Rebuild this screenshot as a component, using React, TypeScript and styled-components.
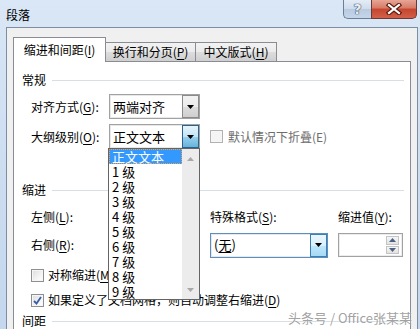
import React from "react";
import styled, { createGlobalStyle } from "styled-components";

const GlobalStyle = createGlobalStyle`
  html, body {
    margin: 0;
    padding: 0;
  }
  body {
    width: 420px;
    height: 329px;
    overflow: hidden;
    font-family: "Noto Sans CJK SC", "Microsoft YaHei", sans-serif;
    font-size: 12px;
    color: #1e1e1e;
    text-autospace: no-autospace;
  }
`;

const levels = ["1 级", "2 级", "3 级", "4 级", "5 级", "6 级", "7 级", "8 级", "9 级"];

const Key: React.FC<{ k: string }> = ({ k }) => (
  <>
    (<U>{k}</U>)
  </>
);

const Arrow: React.FC<{ up?: boolean; color?: string }> = ({ up, color = "#000" }) => (
  <svg width="7" height="4" viewBox="0 0 7 4">
    <polygon points={up ? "0,4 7,4 3.5,0" : "0,0 7,0 3.5,4"} fill={color} />
  </svg>
);

const Check = () => (
  <svg width="9" height="9" viewBox="0 0 9 9">
    <path d="M1 5 L3.5 7.5 L8 1" fill="none" stroke="#3b5ea8" strokeWidth="1.8" />
  </svg>
);

const App: React.FC = () => {
  return (
    <>
      <GlobalStyle />
      <Window>
        <TitleBar>
          <Title>段落</Title>
          <Caption>
            <HelpButton>?</HelpButton>
            <CloseButton>
              <svg width="16" height="12" viewBox="0 0 16 12">
                <path d="M3 2 L13 10 M13 2 L3 10" stroke="#5a1a10" strokeWidth="4.4" strokeLinecap="square" />
                <path d="M3 2 L13 10 M13 2 L3 10" stroke="#ffffff" strokeWidth="2.2" strokeLinecap="square" />
              </svg>
            </CloseButton>
          </Caption>
        </TitleBar>

        <Body>
          <Tabs>
            <Tab $active $width={93}>
              <span>
                缩进和间距<Key k="I" />
              </span>
            </Tab>
            <Tab $width={91}>
              <span>
                换行和分页<Key k="P" />
              </span>
            </Tab>
            <Tab $width={82}>
              <span>
                中文版式<Key k="H" />
              </span>
            </Tab>
          </Tabs>

          <Panel>
            <GroupHeader $top={10}>
              <span>常规</span>
              <Rule />
            </GroupHeader>

            <FieldRow $top={6}>
              <Label>
                对齐方式<Key k="G" />:
              </Label>
              <Combo $width={91}>
                <ComboText>两端对齐</ComboText>
                <ComboButton>
                  <Arrow />
                </ComboButton>
              </Combo>
            </FieldRow>

            <FieldRow $top={5}>
              <Label>
                大纲级别<Key k="O" />:
              </Label>
              <Combo $width={91}>
                <ComboText>正文文本</ComboText>
                <ComboButton $state="pressed">
                  <Arrow />
                </ComboButton>
                <DropList>
                  <Items>
                    <Item $selected>正文文本</Item>
                    {levels.map((l) => (
                      <Item key={l}>{l}</Item>
                    ))}
                  </Items>
                  <ScrollBar>
                    <Arrow up color="#a8a8a8" />
                    <Arrow color="#a8a8a8" />
                  </ScrollBar>
                </DropList>
              </Combo>
              <CheckLine $disabled $gap={5} $left={10}>
                <Box $disabled />
                <span>默认情况下折叠(E)</span>
              </CheckLine>
            </FieldRow>

            <GroupHeader $top={33}>
              <span>缩进</span>
              <Rule />
            </GroupHeader>

            <IndentGrid>
              <Label>
                左侧<Key k="L" />:
              </Label>
              <GridCell $col={3}>
                <Label>
                  特殊格式<Key k="S" />:
                </Label>
              </GridCell>
              <GridCell $col={4}>
                <Label>
                  缩进值<Key k="Y" />:
                </Label>
              </GridCell>
              <Label>
                右侧<Key k="R" />:
              </Label>
              <GridCell $col={3}>
                <Combo $width={118} $focused>
                  <ComboText>
                    <span>
                      (<U>无</U>)
                    </span>
                  </ComboText>
                  <ComboButton $state="hot">
                    <Arrow />
                  </ComboButton>
                </Combo>
              </GridCell>
              <GridCell $col={4}>
                <Spin>
                  <SpinButtons>
                    <SpinBtn>
                      <Arrow up color="#4d6185" />
                    </SpinBtn>
                    <SpinBtn>
                      <Arrow color="#4d6185" />
                    </SpinBtn>
                  </SpinButtons>
                </Spin>
              </GridCell>
            </IndentGrid>

            <CheckLine $top={10} $gap={4} $left={17}>
              <Box />
              <span>
                对称缩进<Key k="M" />
              </span>
            </CheckLine>
            <CheckLine $top={9} $gap={4} $left={17}>
              <Box>
                <Check />
              </Box>
              <span>
                如果定义了文档网格，则自动调整右缩进<Key k="D" />
              </span>
            </CheckLine>

            <GroupHeader $top={5}>
              <span>间距</span>
              <Rule />
            </GroupHeader>
          </Panel>
        </Body>

        <Watermark>头条号 / Office张某某</Watermark>
      </Window>
    </>
  );
};

const Window = styled.div`
  position: relative;
  width: 420px;
  height: 329px;
  overflow: hidden;
  display: flex;
  flex-direction: column;
  background: linear-gradient(to bottom, #d9e7f6 0%, #cbdcf0 60%, #c4d7ee 100%);
`;

const TitleBar = styled.div`
  height: 27px;
  flex: none;
  display: flex;
  align-items: flex-start;
  justify-content: space-between;
  padding: 0 3px 0 6px;
`;

const Title = styled.div`
  font-size: 12px;
  line-height: 29px;
  color: #000;
`;

const Caption = styled.div`
  display: flex;
`;

const HelpButton = styled.div`
  width: 28px;
  height: 19px;
  box-sizing: border-box;
  border: 1px solid #6d7f96;
  border-top: none;
  border-right: none;
  border-bottom-left-radius: 5px;
  background: linear-gradient(to bottom, #e4ecf6 0%, #cfdcec 50%, #b9cbe1 51%, #c6d6ea 100%);
  display: flex;
  align-items: center;
  justify-content: center;
  font-family: "DejaVu Sans", sans-serif;
  font-weight: bold;
  font-size: 14px;
  color: #e9eef5;
  text-shadow: 0 0 1px #3d4e66, 0 0 1px #3d4e66, 0 0 1px #3d4e66;
`;

const CloseButton = styled.div`
  width: 46px;
  height: 19px;
  box-sizing: border-box;
  border: 1px solid #6d3a33;
  border-top: none;
  border-bottom-right-radius: 5px;
  background: linear-gradient(to bottom, #e8a595 0%, #d57a66 45%, #c6452e 50%, #d2604a 100%);
  display: flex;
  align-items: center;
  justify-content: center;
`;

const Body = styled.div`
  flex: 1;
  display: flex;
  flex-direction: column;
  margin-left: 6px;
  width: 412px;
  box-sizing: border-box;
  border: 1px solid #7d8da2;
  border-bottom: none;
  background: #f0f0f0;
  padding: 9px 6px 0 6px;
`;

const Tabs = styled.div`
  display: flex;
  align-items: flex-end;
  height: 25px;
  margin-bottom: -1px;
  position: relative;
  z-index: 1;
`;

const Tab = styled.div<{ $active?: boolean; $width: number }>`
  width: ${({ $width }) => $width}px;
  height: ${({ $active }) => ($active ? 25 : 20)}px;
  box-sizing: border-box;
  border: 1px solid #898c95;
  border-bottom: ${({ $active }) => ($active ? "none" : "1px solid #898c95")};
  margin-left: ${({ $active }) => ($active ? 0 : -1)}px;
  background: ${({ $active }) =>
    $active ? "#ffffff" : "linear-gradient(to bottom, #f2f2f2 0%, #ebebeb 50%, #dddddd 51%, #cfcfcf 100%)"};
  display: flex;
  align-items: center;
  justify-content: center;
  font-size: 12px;
  line-height: 16px;
  color: #000;
  white-space: nowrap;
`;

const Panel = styled.div`
  flex: 1;
  position: relative;
  display: flex;
  flex-direction: column;
  background: #fff;
  border: 1px solid #898c95;
  border-bottom: none;
`;

const GroupHeader = styled.div<{ $top: number }>`
  margin-top: ${({ $top }) => $top}px;
  height: 16px;
  line-height: 16px;
  display: flex;
  align-items: center;
  padding: 0 6px 0 8px;
  color: #000;
`;

const Rule = styled.div`
  flex: 1;
  height: 1px;
  margin-left: 6px;
  background: #d5dfe5;
`;

const FieldRow = styled.div<{ $top: number }>`
  margin-top: ${({ $top }) => $top}px;
  display: flex;
  align-items: center;
  padding-left: 17px;
`;

const Label = styled.div`
  width: 78px;
  line-height: 16px;
  white-space: nowrap;
  color: #000;
`;

const U = styled.span`
  text-decoration: underline;
  text-underline-offset: 2px;
`;

const Combo = styled.div<{ $width: number; $focused?: boolean }>`
  position: relative;
  width: ${({ $width }) => $width}px;
  height: 25px;
  box-sizing: border-box;
  border: 1px solid ${({ $focused }) => ($focused ? "#5b8fc0" : "#a2a2a2")};
  box-shadow: inset 0 0 0 1px #e8e8e8;
  background: #fff;
  display: flex;
  align-items: stretch;
`;

const ComboText = styled.div`
  flex: 1;
  padding-left: 3px;
  display: flex;
  align-items: center;
  line-height: 16px;
  font-size: 13px;
  color: #000;
`;

const ComboButton = styled.div<{ $state?: "pressed" | "hot" }>`
  width: 17px;
  box-sizing: border-box;
  border: 1px solid
    ${({ $state }) => ($state === "pressed" ? "#2c628b" : $state === "hot" ? "#3c7fb1" : "#8a8a8a")};
  background: ${({ $state }) =>
    $state === "pressed"
      ? "linear-gradient(to bottom, #e5f4fc 0%, #c4e5f6 50%, #98d1ef 51%, #68b3db 100%)"
      : $state === "hot"
      ? "linear-gradient(to bottom, #eaf6fd 0%, #d9f0fc 50%, #bee6fd 51%, #a7d9f5 100%)"
      : "linear-gradient(to bottom, #f2f2f2 0%, #ebebeb 50%, #dddddd 51%, #cfcfcf 100%)"};
  display: flex;
  align-items: center;
  justify-content: center;
`;

const DropList = styled.div`
  position: absolute;
  left: -2px;
  top: 23px;
  width: 92px;
  height: 152px;
  box-sizing: border-box;
  border: 1px solid #646464;
  background: #fff;
  display: flex;
  z-index: 5;
`;

const Items = styled.div`
  flex: 1;
  display: flex;
  flex-direction: column;
`;

const Item = styled.div<{ $selected?: boolean }>`
  height: 15px;
  line-height: 15px;
  padding-left: 3px;
  box-sizing: border-box;
  font-size: 13px;
  color: ${({ $selected }) => ($selected ? "#fff" : "#000")};
  background: ${({ $selected }) => ($selected ? "#3399ff" : "transparent")};
  outline: ${({ $selected }) => ($selected ? "1px dotted #f0a040" : "none")};
  outline-offset: -1px;
  white-space: nowrap;
`;

const ScrollBar = styled.div`
  width: 17px;
  background: #ececec;
  display: flex;
  flex-direction: column;
  align-items: center;
  justify-content: space-between;
  padding: 8px 0 7px;
  box-sizing: border-box;
`;

const CheckLine = styled.div<{ $top?: number; $gap: number; $left: number; $disabled?: boolean }>`
  margin-top: ${({ $top }) => $top ?? 0}px;
  margin-left: ${({ $left }) => $left}px;
  height: 16px;
  display: flex;
  align-items: center;
  gap: ${({ $gap }) => $gap}px;
  line-height: 16px;
  white-space: nowrap;
  color: ${({ $disabled }) => ($disabled ? "#6d6d6d" : "#000")};
`;

const Box = styled.div<{ $disabled?: boolean }>`
  width: 13px;
  height: 13px;
  flex: none;
  box-sizing: border-box;
  border: 1px solid ${({ $disabled }) => ($disabled ? "#b1b1b1" : "#8e8f8f")};
  background: ${({ $disabled }) =>
    $disabled ? "#f4f4f4" : "linear-gradient(135deg, #dcdcdc 0%, #f4f4f4 60%, #ffffff 100%)"};
  box-shadow: inset 0 0 0 1px #f6f6f6;
  display: flex;
  align-items: center;
  justify-content: center;
`;

const IndentGrid = styled.div`
  margin-top: 11px;
  padding-left: 17px;
  display: grid;
  grid-template-columns: 78px 101px 128px 65px;
  grid-template-rows: 16px 24px;
  row-gap: 8px;
  align-items: center;
`;

const GridCell = styled.div<{ $col: number }>`
  grid-column: ${({ $col }) => $col};
`;

const Spin = styled.div`
  width: 65px;
  height: 24px;
  box-sizing: border-box;
  border: 1px solid #a2a2a2;
  box-shadow: inset 0 0 0 1px #ececec;
  background: #fff;
  display: flex;
  justify-content: flex-end;
  padding: 2px 3px 2px 0;
`;

const SpinButtons = styled.div`
  width: 13px;
  display: flex;
  flex-direction: column;
  gap: 1px;
`;

const SpinBtn = styled.div`
  flex: 1;
  box-sizing: border-box;
  border: 1px solid #c4c4c4;
  background: linear-gradient(to bottom, #f6f6f6, #e2e2e2);
  display: flex;
  align-items: center;
  justify-content: center;
`;

const Watermark = styled.div`
  position: absolute;
  right: 8px;
  bottom: 3px;
  font-size: 13px;
  line-height: 16px;
  color: rgba(150, 150, 150, 0.9);
  text-shadow: 0 0 2px rgba(255, 255, 255, 0.9);
  white-space: nowrap;
  z-index: 10;
`;

export default App;
